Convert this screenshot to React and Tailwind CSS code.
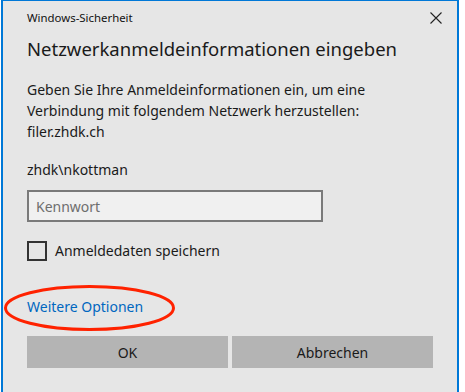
import React from 'react';

export default function App() {
    return (
        <div className="w-[465px] h-[392px] bg-white overflow-hidden relative">
            <div
                className="ml-[1px] w-[458px] h-full bg-[#e6e6e6] border-t border-l-2 border-r-2 border-[#0078d7] text-black"
                style={{ fontFamily: '"Noto Sans", "Open Sans", sans-serif' }}
            >
                {/* Title bar */}
                <div className="h-[34px] flex items-center justify-between pl-[24px] pr-[15px]">
                    <span className="text-[11.4px] text-[#111]">Windows-Sicherheit</span>
                    <svg width="12" height="12" viewBox="0 0 12 12" className="text-[#222]">
                        <path d="M0.5 0.5 L11.5 11.5 M11.5 0.5 L0.5 11.5" stroke="currentColor" strokeWidth="1.1" fill="none" />
                    </svg>
                </div>

                <div className="pl-[24px]">
                    <h1 className="text-[18.5px] leading-[28px] text-[#1a1a1a]">Netzwerkanmeldeinformationen eingeben</h1>

                    <p className="mt-[16px] text-[14px] leading-[21px] text-[#1a1a1a]">
                        Geben Sie Ihre Anmeldeinformationen ein, um eine<br />
                        Verbindung mit folgendem Netzwerk herzustellen:<br />
                        filer.zhdk.ch
                    </p>

                    <div className="mt-[17px] text-[14px] leading-[21px] text-[#1a1a1a]">zhdk\nkottman</div>

                    <div className="mt-[10px] w-[296px] h-[32px] border-2 border-[#7a7a7a] bg-[#f0f0f0] flex items-center pl-[7px]">
                        <span className="text-[14px] text-[#6e6e6e]">Kennwort</span>
                    </div>

                    <div className="mt-[18px] flex items-center gap-[8px]">
                        <div className="w-[20px] h-[20px] border-2 border-[#333] bg-transparent" />
                        <span className="text-[14px] leading-[21px] text-[#1a1a1a]">Anmeldedaten speichern</span>
                    </div>

                    <div className="mt-[35px] text-[14px] leading-[21px] text-[#0067c0]">Weitere Optionen</div>

                    <div className="mt-[19px] flex gap-[4px]">
                        <button className="w-[201px] h-[32px] bg-[#b4b4b4] text-[14px] text-[#1a1a1a]">OK</button>
                        <button className="w-[201px] h-[32px] bg-[#b4b4b4] text-[14px] text-[#1a1a1a]">Abbrechen</button>
                    </div>
                </div>
            </div>

            {/* Red annotation ellipse */}
            <svg className="absolute left-[3px] top-[284px]" width="173" height="48" viewBox="0 0 173 48">
                <ellipse cx="86.5" cy="24" rx="84" ry="21.5" fill="none" stroke="#ff2200" strokeWidth="3" />
            </svg>
        </div>
    );
}
